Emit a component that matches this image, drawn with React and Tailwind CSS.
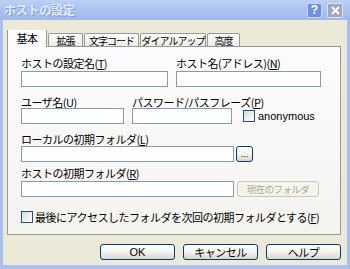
import React from 'react';

const jp = "font-['Noto_Sans_CJK_JP','Noto_Sans',sans-serif]";

const Label = ({ text, keyChar, className = '' }) => (
    <div className={`leading-[12px] h-[12px] whitespace-nowrap ${className}`}>
        {text}(<u>{keyChar}</u>)
    </div>
);

const TextBox = ({ className = '' }) => (
    <div className={`h-[16px] bg-white border border-[#7f9db9] ${className}`} />
);

const CheckBox = () => (
    <div className="w-[12px] h-[12px] border border-[#1c5180] bg-gradient-to-br from-[#dcdcd7] to-white shrink-0" />
);

const XpButton = ({ children, className = '' }) => (
    <div className={`h-[16px] flex items-center justify-center rounded-[3px] border border-[#003c74] bg-gradient-to-b from-white via-[#f3f3ef] to-[#d9d5c9] ${className}`}>
        {children}
    </div>
);

const tabs = ['拡張', '文字コード', 'ダイアルアップ', '高度'];
const tabWidths = ['w-[35px]', 'w-[55px]', 'w-[66px]', 'w-[33px]'];

export default function App() {
    return (
        <div className={`w-[350px] h-[269px] bg-[#a9bff0] flex flex-col text-[11px] tracking-[-0.5px] text-black ${jp}`}>
            {/* Title bar */}
            <div className="h-[20px] flex items-center pl-[4px] pr-[7px] bg-gradient-to-b from-[#bccff5] to-[#9db8ec]">
                <span className="text-[12px] font-bold text-[#e4ecfb] tracking-[-0.2px] [text-shadow:1px_1px_0_#7f99d6]">ホストの設定</span>
                <div className="ml-auto flex items-center gap-[5px]">
                    <div className="w-[15px] h-[15px] rounded-[2px] bg-[#6f90e2] border border-[#c9d6f6] flex items-center justify-center text-white text-[12px] font-bold leading-none font-['Liberation_Sans',sans-serif] tracking-normal">?</div>
                    <div className="w-[16px] h-[15px] rounded-[2px] bg-[#a0a7bf] border border-[#dde2ee] flex items-center justify-center">
                        <svg width="9" height="9" viewBox="0 0 9 9">
                            <path d="M1 1L8 8M8 1L1 8" stroke="white" strokeWidth="2" />
                        </svg>
                    </div>
                </div>
            </div>

            {/* Dialog body */}
            <div className="flex-1 mx-[3px] mb-[4px] bg-[#ece9d8] flex flex-col">
                {/* Tabs */}
                <div className="flex items-end gap-[1px] h-[16px] mt-[10px] pl-[4px]">
                    <div className="relative z-10 w-[40px] h-[17px] -mb-px bg-[#fcfcfe] border-x border-[#919b9c] flex flex-col">
                        <div className="h-[2px] bg-[#f6a83a] -mx-px rounded-t-[2px]" />
                        <div className="flex-1 flex items-center justify-center pb-[1px]">基本</div>
                    </div>
                    {tabs.map((t, i) => (
                        <div key={t} className={`${tabWidths[i]} shrink-0 h-[13px] border border-b-0 border-[#919b9c] rounded-t-[2px] bg-gradient-to-b from-white to-[#ecebe5] flex items-center justify-center whitespace-nowrap text-[10px] tracking-[-1px]`}>
                            {t}
                        </div>
                    ))}
                </div>

                {/* Tab panel */}
                <div className="ml-[4px] w-[334px] h-[189px] border border-[#919b9c] bg-gradient-to-b from-[#fcfcfe] to-[#f4f3ee] pl-[13px] flex flex-col">
                    <div className="flex gap-[8px] mt-[10px]">
                        <div className="flex flex-col gap-[2px] w-[147px] shrink-0">
                            <Label text="ホストの設定名" keyChar="T" />
                            <TextBox className="w-[147px]" />
                        </div>
                        <div className="flex flex-col gap-[2px] w-[145px] shrink-0">
                            <Label text="ホスト名(アドレス)" keyChar="N" />
                            <TextBox className="w-[145px]" />
                        </div>
                    </div>

                    <div className="flex mt-[9px]">
                        <div className="flex flex-col w-[103px] shrink-0">
                            <Label text="ユーザ名" keyChar="U" />
                            <TextBox className="w-[103px]" />
                        </div>
                        <div className="flex flex-col ml-[8px] w-[100px] shrink-0">
                            <Label text="パスワード/パスフレーズ" keyChar="P" />
                            <TextBox className="w-[100px]" />
                        </div>
                        <div className="flex items-center self-end h-[16px] ml-[11px] gap-[3px]">
                            <CheckBox />
                            <span className="font-['Liberation_Sans',sans-serif] text-[11px] tracking-normal">anonymous</span>
                        </div>
                    </div>

                    <div className="flex flex-col mt-[9px] gap-[1px]">
                        <Label text="ローカルの初期フォルダ" keyChar="L" />
                        <div className="flex gap-[2px]">
                            <TextBox className="w-[213px]" />
                            <XpButton className="w-[17px] text-[9px] leading-none tracking-normal font-['Liberation_Sans',sans-serif]">...</XpButton>
                        </div>
                    </div>

                    <div className="flex flex-col mt-[5px] gap-[2px]">
                        <Label text="ホストの初期フォルダ" keyChar="R" />
                        <div className="flex gap-[3px]">
                            <TextBox className="w-[213px]" />
                            <div className="w-[82px] h-[16px] rounded-[3px] border border-[#c9c7ba] bg-[#f5f4ea] text-[#aca899] text-[9.5px] tracking-[-0.6px] flex items-center justify-center">
                                現在のフォルダ
                            </div>
                        </div>
                    </div>

                    <div className="flex items-center mt-[14px] gap-[2px]">
                        <CheckBox />
                        <span className="leading-[12px]">最後にアクセスしたフォルダを次回の初期フォルダとする(<u>F</u>)</span>
                    </div>
                </div>

                {/* Buttons */}
                <div className="flex justify-end gap-[8px] mt-[9px] w-[338px]">
                    <XpButton className="w-[75px] font-['Liberation_Sans',sans-serif] tracking-normal">OK</XpButton>
                    <XpButton className="w-[75px]">キャンセル</XpButton>
                    <XpButton className="w-[75px]">ヘルプ</XpButton>
                </div>
            </div>
        </div>
    );
}
